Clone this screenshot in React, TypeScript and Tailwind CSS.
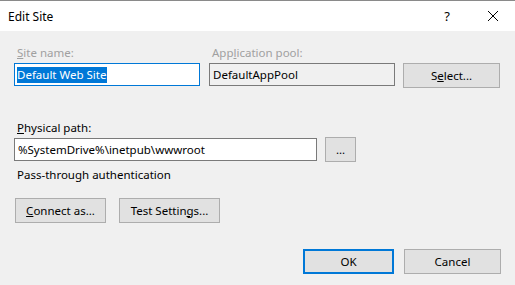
import React from "react";

const font = { fontFamily: '"Segoe UI", "Noto Sans", sans-serif' };

function Btn({
    children,
    className = "",
    primary = false,
}: {
    children: React.ReactNode;
    className?: string;
    primary?: boolean;
}) {
    const edge = primary ? "border-2 border-[#0078d7]" : "border border-[#adadad]";
    return (
        <button
            className={`h-[25px] bg-[#e1e1e1] ${edge} text-[11.5px] text-black flex items-center justify-center leading-none ${className}`}
        >
            {children}
        </button>
    );
}

export default function App() {
    return (
        <div className="w-[515px] h-[285px] bg-[#f0f0f0] border-t border-[#8a8a8a] flex flex-col text-[11.5px] text-black" style={font}>
            {/* title bar */}
            <div className="h-[30px] bg-white flex items-center pl-[8px]">
                <span className="leading-none mt-[1px] text-[12px]">Edit Site</span>
                <span className="ml-auto mr-[37px] text-[13px] leading-none">?</span>
                <svg width="12" height="12" viewBox="0 0 12 12" className="mr-[16px]">
                    <path d="M1 1 L11 11 M11 1 L1 11" stroke="#000" strokeWidth="1" />
                </svg>
            </div>

            <div className="flex flex-col pl-[14px] pt-[14px]">
                <div className="flex items-end">
                    <div className="w-[186px] flex flex-col">
                        <span className="text-[#a0a0a0] ml-[3px] leading-[16px] mb-[2px]">
                            <span className="underline">S</span>ite name:
                        </span>
                        <div className="h-[23px] border border-solid border-[#0078d7] bg-white flex items-center pl-[2px]">
                            <span className="bg-[#0078d7] text-white leading-[16px] pr-[1px]">Default Web Site</span>
                        </div>
                    </div>
                    <div className="w-[186px] ml-[9px] flex flex-col">
                        <span className="text-[#a0a0a0] ml-[3px] leading-[16px] mb-[2px]">
                            App<span className="underline">l</span>ication pool:
                        </span>
                        <div className="h-[23px] border border-[#7a7a7a] bg-[#f0f0f0] flex items-center pl-[3px]">
                            DefaultAppPool
                        </div>
                    </div>
                    <Btn className="w-[97px] ml-[8px] mb-[-2px]">
                        <span>
                            S<span className="underline">e</span>lect...
                        </span>
                    </Btn>
                </div>

                <span className="ml-[3px] mt-[34px] leading-[16px] mb-[1px]">
                    <span className="underline">P</span>hysical path:
                </span>
                <div className="flex items-center">
                    <div className="w-[303px] h-[23px] border border-[#7a7a7a] bg-white flex items-center pl-[3px]">
                        %SystemDrive%\inetpub\wwwroot
                    </div>
                    <Btn className="w-[31px] ml-[8px]">...</Btn>
                </div>
                <span className="ml-[3px] mt-[5px] leading-[16px]">Pass-through authentication</span>

                <div className="flex mt-[15px] ml-[1px] gap-[13px]">
                    <Btn className="w-[91px]">
                        <span>
                            <span className="underline">C</span>onnect as...
                        </span>
                    </Btn>
                    <Btn className="w-[101px]">
                        <span>
                            Test Settin<span className="underline">g</span>s...
                        </span>
                    </Btn>
                </div>

                <div className="flex mt-[26px] ml-[289px] gap-[10px]">
                    <Btn primary className="w-[91px]">OK</Btn>
                    <Btn className="w-[97px]">Cancel</Btn>
                </div>
            </div>
        </div>
    );
}
